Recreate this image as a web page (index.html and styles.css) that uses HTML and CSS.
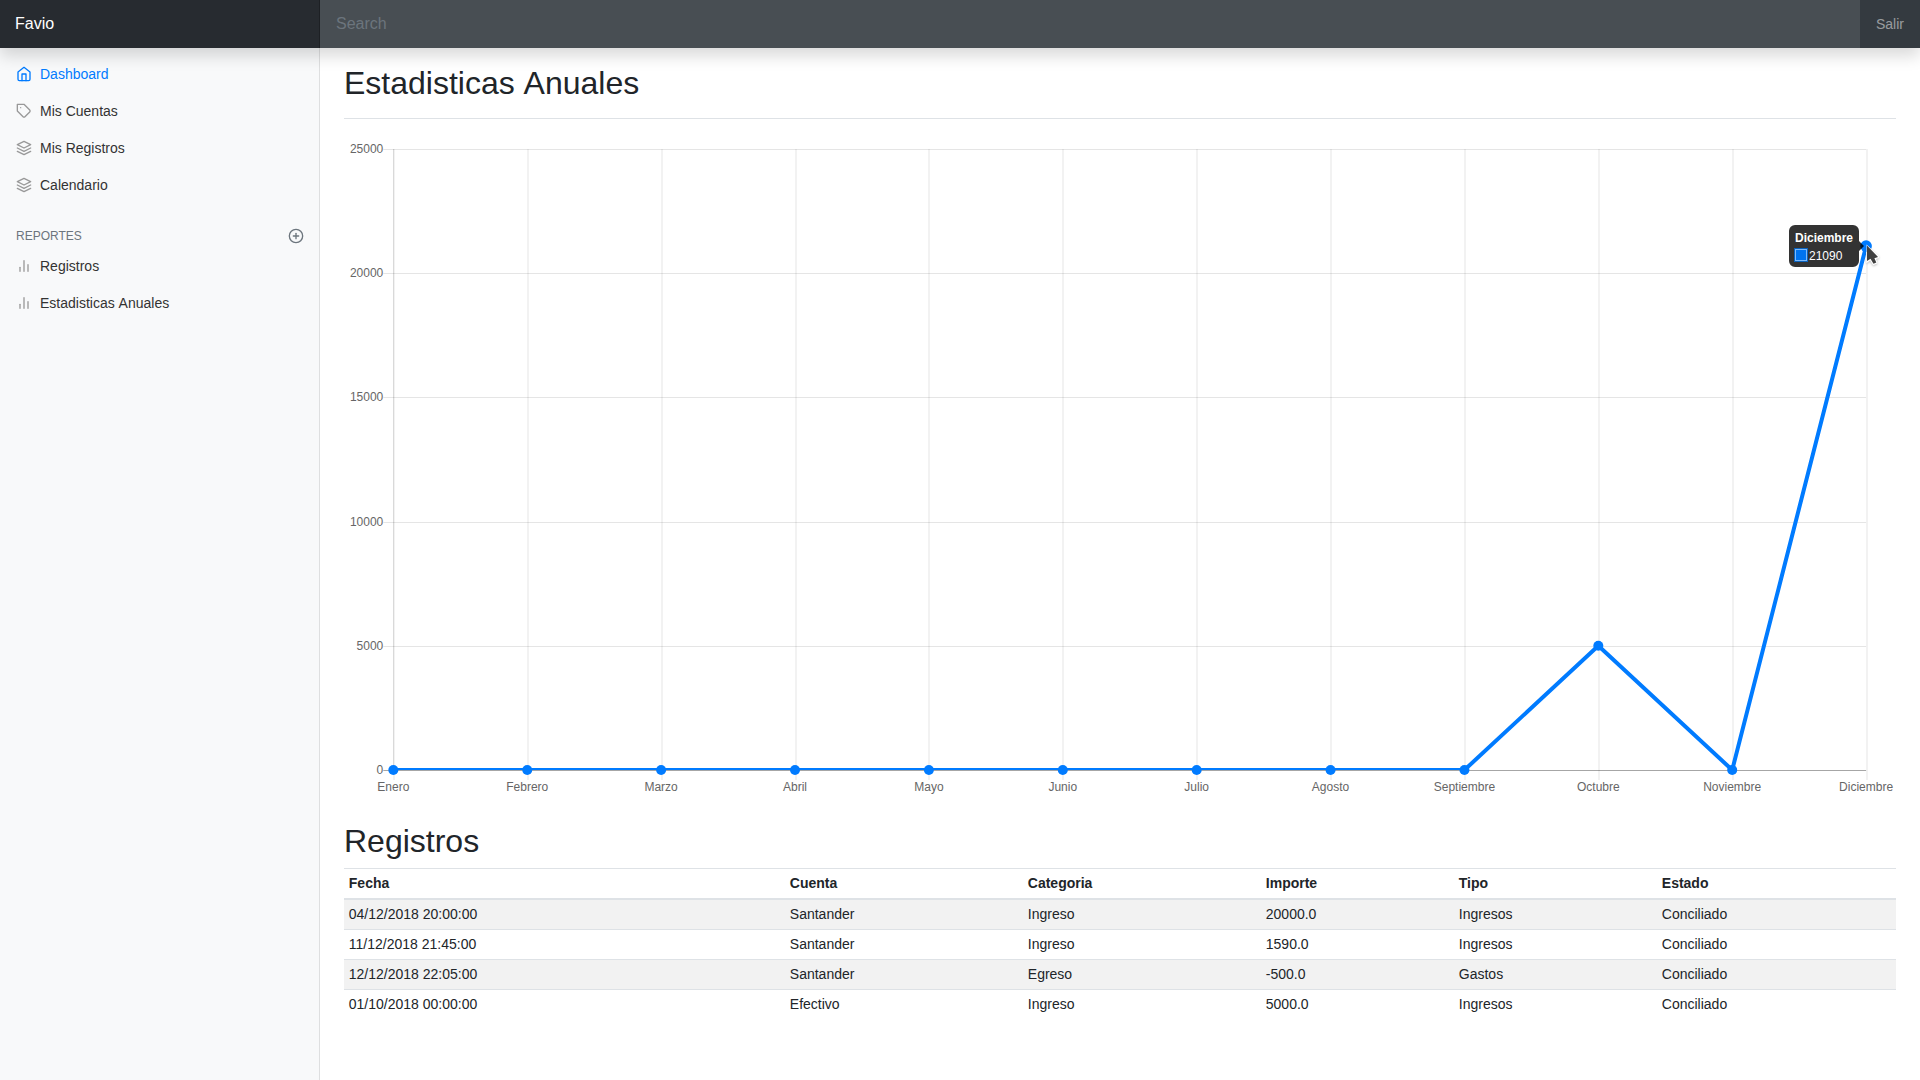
FILE: index.html
```html
<!DOCTYPE html>
<html lang="es">
<head>
<meta charset="utf-8">
<title>Estadisticas Anuales</title>
<link rel="stylesheet" href="styles.css">
</head>
<body>
<svg class="sprite" width="0" height="0" aria-hidden="true">
  <symbol id="home" viewBox="0 0 24 24"><path d="M3 9l9-7 9 7v11a2 2 0 0 1-2 2H5a2 2 0 0 1-2-2z"/><polyline points="9 22 9 12 15 12 15 22"/></symbol>
  <symbol id="tag" viewBox="0 0 24 24"><path d="M20.59 13.41l-7.17 7.17a2 2 0 0 1-2.83 0L2 12V2h10l8.59 8.59a2 2 0 0 1 0 2.82z"/><line x1="7" y1="7" x2="7" y2="7"/></symbol>
  <symbol id="layers" viewBox="0 0 24 24"><polygon points="12 2 2 7 12 12 22 7 12 2"/><polyline points="2 17 12 22 22 17"/><polyline points="2 12 12 17 22 12"/></symbol>
  <symbol id="plus" viewBox="0 0 24 24"><circle cx="12" cy="12" r="10"/><line x1="12" y1="8" x2="12" y2="16"/><line x1="8" y1="12" x2="16" y2="12"/></symbol>
  <symbol id="bars" viewBox="0 0 24 24"><line x1="18" y1="20" x2="18" y2="10"/><line x1="12" y1="20" x2="12" y2="4"/><line x1="6" y1="20" x2="6" y2="14"/></symbol>
</svg>
<header class="navbar">
  <a class="brand">Favio</a>
  <input class="search" type="text" placeholder="Search" aria-label="Search">
  <a class="logout">Salir</a>
</header>
<div class="layout">
  <nav class="sidebar">
    <a class="link active"><svg class="icon"><use href="#home"/></svg>Dashboard</a>
    <a class="link"><svg class="icon"><use href="#tag"/></svg>Mis Cuentas</a>
    <a class="link"><svg class="icon"><use href="#layers"/></svg>Mis Registros</a>
    <a class="link"><svg class="icon"><use href="#layers"/></svg>Calendario</a>
    <h6 class="group"><span>Reportes</span><svg class="icon"><use href="#plus"/></svg></h6>
    <a class="link"><svg class="icon"><use href="#bars"/></svg>Registros</a>
    <a class="link"><svg class="icon"><use href="#bars"/></svg><span class="spaced">Estadisticas Anuales</span></a>
  </nav>
  <main class="main">
    <div class="title"><h1 class="spaced">Estadisticas Anuales</h1></div>
    <svg class="chart" id="chart" width="1552" height="655" viewBox="0 0 1552 655"></svg>
    <h2>Registros</h2>
    <table class="table">
      <colgroup><col class="c1"><col class="c2"><col class="c3"><col class="c4"><col class="c5"><col class="c6"></colgroup>
      <thead><tr><th>Fecha</th><th>Cuenta</th><th>Categoria</th><th>Importe</th><th>Tipo</th><th>Estado</th></tr></thead>
      <tbody>
        <tr><td>04/12/2018 20:00:00</td><td>Santander</td><td>Ingreso</td><td>20000.0</td><td>Ingresos</td><td>Conciliado</td></tr>
        <tr><td>11/12/2018 21:45:00</td><td>Santander</td><td>Ingreso</td><td>1590.0</td><td>Ingresos</td><td>Conciliado</td></tr>
        <tr><td>12/12/2018 22:05:00</td><td>Santander</td><td>Egreso</td><td>-500.0</td><td>Gastos</td><td>Conciliado</td></tr>
        <tr><td>01/10/2018 00:00:00</td><td>Efectivo</td><td>Ingreso</td><td>5000.0</td><td>Ingresos</td><td>Conciliado</td></tr>
      </tbody>
    </table>
  </main>
</div>
<script src="chart.js"></script>
</body>
</html>
```
FILE: styles.css
```css
*, *::before, *::after { box-sizing: border-box; }
body {
  margin: 0;
  height: 100vh;
  overflow: hidden;
  display: flex;
  flex-direction: column;
  font: 14px/1.5 "Liberation Sans", Arial, sans-serif;
  color: #212529;
  background: #fff;
}
.sprite { position: absolute; }
.navbar {
  flex: none;
  display: flex;
  height: 48px;
  background: #343a40;
  box-shadow: 0 8px 16px rgba(0, 0, 0, .15);
  z-index: 2;
}
.brand {
  width: 320px;
  padding: 12px 15px;
  font-size: 16px;
  line-height: 24px;
  color: #fff;
  background: rgba(0, 0, 0, .25);
  box-shadow: inset -1px 0 0 rgba(0, 0, 0, .25);
}
.search {
  flex: 1;
  padding: 12px 16px;
  border: 0;
  border-radius: 0;
  font: 16px/24px "Liberation Sans", Arial, sans-serif;
  color: #fff;
  background: rgba(255, 255, 255, .1);
}
.search::placeholder { color: #6c757d; opacity: 1; }
.logout {
  padding: 0 16px;
  line-height: 48px;
  color: rgba(255, 255, 255, .5);
}
.layout { flex: 1; display: flex; min-height: 0; }
.sidebar {
  width: 320px;
  flex: none;
  padding-top: 8px;
  background: #f8f9fa;
  box-shadow: inset -1px 0 0 rgba(0, 0, 0, .1);
}
.icon {
  width: 16px;
  height: 16px;
  flex: none;
  fill: none;
  stroke: currentColor;
  stroke-width: 2;
  stroke-linecap: round;
  stroke-linejoin: round;
}
.link {
  display: flex;
  align-items: flex-start;
  gap: 8px;
  padding: 8px 16px;
  color: #333;
}
.link .icon { margin-top: 2px; color: #999; }
.active, .link.active .icon { color: #007bff; }
.spaced { word-spacing: .055em; }
.group {
  display: flex;
  justify-content: space-between;
  align-items: center;
  margin: 24px 0 4px;
  padding: 0 16px;
  font-size: 12px;
  font-weight: 400;
  line-height: 16px;
  text-transform: uppercase;
  color: #6c757d;
}
.main { flex: 1; padding: 16px 24px 0; }
.title {
  padding-bottom: 16px;
  margin-bottom: 24px;
  border-bottom: 1px solid #dee2e6;
}
h1, h2 { margin: 0; font-size: 32px; font-weight: 400; line-height: 1.2; }
.chart { display: block; font-size: 12px; overflow: visible; }
h2 { margin: 24px 0 7.2px; }
.table { width: 100%; border-collapse: separate; border-spacing: 0; table-layout: fixed; }
.c1 { width: 441px; }
.c2 { width: 238px; }
.c3 { width: 238px; }
.c4 { width: 193px; }
.c5 { width: 203px; }
.table th, .table td {
  padding: 4px 4.8px;
  text-align: left;
  border-top: 1px solid #dee2e6;
}
.table th { border-bottom: 2px solid #dee2e6; }
.table tbody tr:first-child td { border-top: 0; }
.table tbody tr:nth-child(odd) { background: rgba(0, 0, 0, .05); }
.grid { stroke: rgba(0, 0, 0, .1); }
.zero { stroke: rgba(0, 0, 0, .35); }
.tick { fill: #666; }
.middle { text-anchor: middle; }
.end { text-anchor: end; }
.series { fill: none; stroke: #007bff; stroke-width: 4; stroke-linejoin: miter; }
.point { fill: #007bff; }
.tip { fill: rgba(0, 0, 0, .8); }
.tip-text { fill: #fff; }
.tip-title { font-weight: 700; }
.swatch { fill: #0073ee; stroke: #7db9fa; }
.swatch-edge { fill: #0a62bd; }
.cursor-edge { fill: #fff; filter: drop-shadow(0 1px 1px rgba(0, 0, 0, .25)); }
.cursor { fill: #404040; }
```
FILE: chart.js
```javascript
const months = ['Enero', 'Febrero', 'Marzo', 'Abril', 'Mayo', 'Junio', 'Julio', 'Agosto', 'Septiembre', 'Octubre', 'Noviembre', 'Diciembre'];
const values = [0, 0, 0, 0, 0, 0, 0, 0, 0, 5000, 0, 21090];
const left = 49.35, right = 1522.1, top0 = 6, bottom = 627;
const px = i => left + i * (right - left) / 11;
const py = v => bottom - v / 25000 * (bottom - top0);
let s = '';
for (let v = 0; v <= 25000; v += 5000) {
  const y = Math.round(py(v)) + .5;
  s += `<line class="${v ? 'grid' : 'zero'}" x1="39.3" x2="${right}" y1="${y}" y2="${y}"/>`;
  s += `<text class="tick end" x="39.3" y="${y + 3.5}">${v}</text>`;
}
months.forEach((m, i) => {
  const x = px(i), g = Math.round(x + .5);
  s += `<line class="grid" x1="${g}" x2="${g}" y1="6" y2="637"/>`;
  s += `<text class="tick middle" x="${x}" y="648">${m}</text>`;
});
s += '<line class="grid" x1="49.5" x2="49.5" y1="6" y2="627"/>';
s += `<clipPath id="area"><rect x="${left}" y="${top0}" width="${right - left}" height="${bottom - top0}"/></clipPath>`;
s += `<polyline class="series" clip-path="url(#area)" points="${values.map((v, i) => px(i) + ',' + py(v)).join(' ')}"/>`;
values.forEach((v, i) => { s += `<circle class="point" cx="${px(i)}" cy="${py(v)}" r="${i === 11 ? 5.8 : 5}"/>`; });
s += `<path class="tip" d="M1451 82h58a6 6 0 0 1 6 6v10l5 5-5 5v10a6 6 0 0 1-6 6h-58a6 6 0 0 1-6-6v-30a6 6 0 0 1 6-6z"/>
<text class="tip-text tip-title" x="1451" y="99">Diciembre</text>
<rect class="swatch-edge" x="1450" y="105" width="14" height="14"/>
<rect class="swatch" x="1451.5" y="106.5" width="11" height="11"/>
<text class="tip-text" x="1465" y="117">21090</text>
<path class="cursor-edge" d="M1522.6 101.5L1535 113.2L1535 115L1532 116L1533.7 120.2L1529.2 122.2L1526.2 117.6L1522.3 120.2Z"/>
<path class="cursor" d="M1523 102.4L1523 118L1526.5 115.8L1529.5 120.8L1532.3 119.5L1530.4 115.2L1534 114Z"/>`;
document.getElementById('chart').innerHTML = s;
```
